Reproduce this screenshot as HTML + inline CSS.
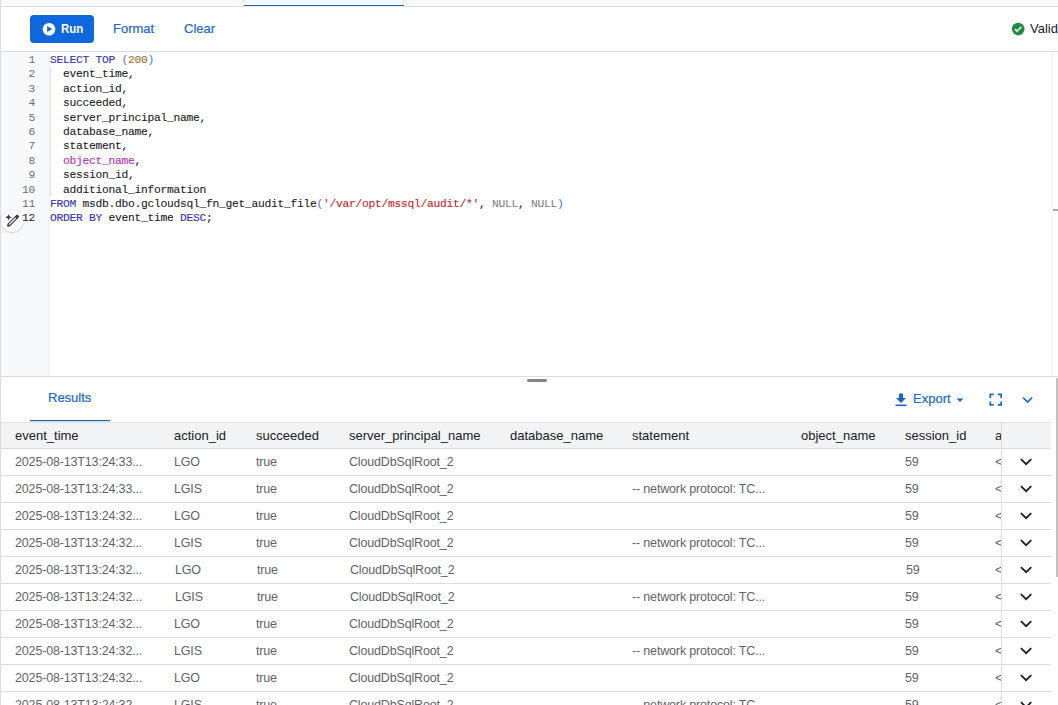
<!DOCTYPE html>
<html><head><meta charset="utf-8">
<style>
*{box-sizing:border-box;margin:0;padding:0}
html,body{width:1058px;height:705px;overflow:hidden;background:#fff;font-family:"Liberation Sans",sans-serif;color:#202124}
.abs{position:absolute}
#top{left:0;top:0;width:1058px;height:7px;background:linear-gradient(#f8f9fb 0,#f8f9fb 4px,#fbfcfd 5px,#fbfcfd 6px);border-bottom:1px solid #d9dadc}
#tabline{left:244px;top:0;width:160px;height:7px;background:linear-gradient(#f6fcff 0,#f2fbff 5px,#2a5f9f 5px,#2a5f9f 6.2px,#dbeaf8 6.2px,#f5f9fd 7px)}
#lborder{left:0;top:0;width:1px;height:705px;background:#dadce0}
#run{left:30px;top:15px;width:64px;height:28px;background:#0f67de;border-radius:4px}
#runtxt{left:61px;top:21px;font-size:13px;font-weight:700;color:#fff;line-height:15px;transform:scaleX(0.88);transform-origin:0 0}
.tbtn{font-size:13px;color:#1a66c9;line-height:15px;top:21px;-webkit-text-stroke:0.2px currentColor}
#tbborder{left:0;top:51px;width:1058px;height:1px;background:#dadce0}
#gutter{left:1px;top:52px;width:49px;height:324px;background:#f8f9fa;box-shadow:inset -2px 0 0 #f4f5f5}
#edborder{left:0;top:376px;width:1058px;height:1px;background:#dadce0}
.ln{position:absolute;left:0;width:35px;text-align:right;font-family:"Liberation Mono",monospace;font-size:11.3px;letter-spacing:-0.28px;line-height:14.4px;color:#6b6e72}
.cl{position:absolute;left:50px;font-family:"Liberation Mono",monospace;font-size:11.3px;letter-spacing:-0.28px;line-height:14.4px;color:#202124;white-space:pre;-webkit-text-stroke:0.1px currentColor}
.k{color:#3333b3}.n{color:#9c6b24}.p{color:#5a82d2}.s{color:#c5221f}.g{color:#80868b}.m{color:#b52fb5}
#guide{left:50px;top:67px;width:1px;height:129px;background:#e0e0e0}
#valid{left:1030px;top:21px;font-size:13px;color:#202124;line-height:15px}
#restab{left:48px;top:390px;font-size:13px;color:#1a66c9;line-height:15px;-webkit-text-stroke:0.2px currentColor}
#resline{left:30px;top:420px;width:80px;height:1px;background:#2459a0;box-shadow:0 1px 0 #bfe0fa}
#thead{left:1px;top:422px;width:1050px;height:27px;background:#f1f3f4;border-top:1px solid #e3e3e3;border-bottom:1px solid #dadce0}
.th{position:absolute;top:428px;font-size:13px;line-height:15px;color:#202124;white-space:nowrap}
.row{position:absolute;left:1px;width:1050px;height:27px;border-bottom:1px solid #dadce0}
.td{position:absolute;font-size:12.5px;letter-spacing:-0.16px;line-height:15px;color:#5f6368;white-space:nowrap;overflow:hidden}
#vdiv{left:1001px;top:422px;width:1px;height:283px;background:#dadce0}
#scroll{left:1056px;top:378px;width:2px;height:199px;background:#c1c1c1}
#export{left:913px;top:391px;font-size:13px;color:#1a66c9;line-height:15px;-webkit-text-stroke:0.2px currentColor}
</style></head><body>
<div id="top" class="abs"></div>
<div id="tabline" class="abs"></div>
<div id="lborder" class="abs"></div>

<div id="run" class="abs"></div>
<svg class="abs" style="left:42px;top:22px" width="14" height="14" viewBox="0 0 14 14"><circle cx="7" cy="7.2" r="6.3" fill="#fff"/><path d="M5.1 4.0 L10.3 7.1 L5.1 10.0 Z" fill="#0f67de"/></svg>
<div id="runtxt" class="abs">Run</div>
<div class="abs tbtn" style="left:113px">Format</div>
<div class="abs tbtn" style="left:184px">Clear</div>
<svg class="abs" style="left:1011px;top:22px" width="14" height="14" viewBox="0 0 14 14"><circle cx="7.2" cy="7" r="6.3" fill="#1e8e3e"/><path d="M3.9 7.2 L6.0 9.2 L10.3 4.9" stroke="#fff" stroke-width="1.6" fill="none"/></svg>
<div id="valid" class="abs">Valid</div>
<div id="tbborder" class="abs"></div>

<div id="gutter" class="abs"></div>
<div id="guide" class="abs"></div>
<div class="abs" style="left:1052px;top:52px;width:1px;height:324px;background:#f0f0f0"></div>
<div class="abs" style="left:1053px;top:209px;width:5px;height:2px;background:#a8a8a8"></div>
<div id="code" class="abs" style="left:0;top:53px;width:1058px;height:200px">
<div class="ln" style="top:0px">1</div><div class="cl" style="top:0px"><span class="k">SELECT</span> <span class="k">TOP</span> <span class="p">(</span><span class="n">200</span><span class="p">)</span></div>
<div class="ln" style="top:14.4px">2</div><div class="cl" style="top:14.4px">  event_time,</div>
<div class="ln" style="top:28.8px">3</div><div class="cl" style="top:28.8px">  action_id,</div>
<div class="ln" style="top:43.2px">4</div><div class="cl" style="top:43.2px">  succeeded,</div>
<div class="ln" style="top:57.6px">5</div><div class="cl" style="top:57.6px">  server_principal_name,</div>
<div class="ln" style="top:72px">6</div><div class="cl" style="top:72px">  database_name,</div>
<div class="ln" style="top:86.4px">7</div><div class="cl" style="top:86.4px">  statement,</div>
<div class="ln" style="top:100.8px">8</div><div class="cl" style="top:100.8px">  <span class="m">object_name</span>,</div>
<div class="ln" style="top:115.2px">9</div><div class="cl" style="top:115.2px">  session_id,</div>
<div class="ln" style="top:129.6px">10</div><div class="cl" style="top:129.6px">  additional_information</div>
<div class="ln" style="top:144px">11</div><div class="cl" style="top:144px"><span class="k">FROM</span> msdb.dbo.gcloudsql_fn_get_audit_file<span class="p">(</span><span class="s">'/var/opt/mssql/audit/*'</span>, <span class="g">NULL</span>, <span class="g">NULL</span><span class="p">)</span></div>
<div class="ln" style="top:158.4px;color:#202124">12</div><div class="cl" style="top:158.4px"><span class="k">ORDER</span> <span class="k">BY</span> event_time <span class="k">DESC</span>;</div>
</div>
<!-- magic pencil -->
<div class="abs" style="left:1px;top:210px;width:22px;height:22px;border-radius:50%;background:#fff;box-shadow:0 0.5px 2px rgba(60,64,67,.35)"></div>
<svg class="abs" style="left:0;top:206px" width="28" height="30" viewBox="0 0 28 30"><path d="M8.5 8.2 Q8.9 10.9 11.6 11.3 Q8.9 11.7 8.5 14.4 Q8.1 11.7 5.4 11.3 Q8.1 10.9 8.5 8.2 Z" fill="#3c4043"/><g transform="translate(12.75 15) rotate(-45)"><path d="M-8 0 L-5.9 -1.75 L7 -1.75 Q7.9 -1.75 7.9 -0.85 L7.9 0.85 Q7.9 1.75 7 1.75 L-5.9 1.75 Z" fill="#3c4043"/><rect x="-5.2" y="-0.6" width="9.4" height="1.2" fill="#fff"/></g></svg>
<div id="edborder" class="abs"></div>
<div class="abs" style="left:527px;top:379px;width:20px;height:3px;border-radius:2px;background:#80868b"></div>

<div id="restab" class="abs">Results</div>
<div id="resline" class="abs"></div>
<svg class="abs" style="left:894px;top:392px" width="14" height="16" viewBox="0 0 14 16"><path d="M5 1.5 H9 V6 H12 L7 11 L2 6 H5 Z" fill="#1a66c9"/><rect x="1.5" y="12.5" width="11" height="1.6" fill="#1a66c9"/></svg>
<div id="export" class="abs">Export</div>
<svg class="abs" style="left:955px;top:397px" width="10" height="6" viewBox="0 0 10 6"><path d="M1.5 1.5 H8.5 L5 5 Z" fill="#1a66c9"/></svg>
<svg class="abs" style="left:988px;top:392px" width="15" height="15" viewBox="0 0 15 15"><path d="M2.25 5.9 V2.4 H5.7 M9.8 2.4 H13.15 V5.9 M13.15 9.4 V12.85 H9.8 M5.7 12.85 H2.25 V9.4" stroke="#1a66c9" stroke-width="1.7" fill="none"/></svg>
<svg class="abs" style="left:1020px;top:394px" width="15" height="12" viewBox="0 0 15 12"><path d="M3 3.5 L7.6 8.1 L12.2 3.5" stroke="#1a66c9" stroke-width="1.7" fill="none"/></svg>

<div id="thead" class="abs"></div>
<div class="abs" style="left:30px;top:421px;width:80px;height:2px;background:#cfe4f8"></div>
<div class="th" style="left:15px">event_time</div>
<div class="th" style="left:174px">action_id</div>
<div class="th" style="left:256px">succeeded</div>
<div class="th" style="left:349px">server_principal_name</div>
<div class="th" style="left:510px">database_name</div>
<div class="th" style="left:632px">statement</div>
<div class="th" style="left:801px">object_name</div>
<div class="th" style="left:905px">session_id</div>
<div class="th" style="left:995px;width:6px;overflow:hidden">a</div>

<div id="rows">
<div class="row" style="top:449px"></div>
<div class="td" style="left:15px;top:455px">2025-08-13T13:24:33...</div>
<div class="td" style="left:174px;top:455px">LGO</div>
<div class="td" style="left:256px;top:455px">true</div>
<div class="td" style="left:349px;top:455px">CloudDbSqlRoot_2</div>
<div class="td" style="left:905px;top:455px">59</div>
<div class="td" style="left:995px;top:455px;width:6px">&lt;</div>
<svg class="abs" style="left:1018px;top:455px" width="16" height="14" viewBox="0 0 16 14"><path d="M2.9 4.1 L8.1 9.2 L13.3 4.1" stroke="#1f1f1f" stroke-width="1.8" fill="none"/></svg>
<div class="row" style="top:476px"></div>
<div class="td" style="left:15px;top:482px">2025-08-13T13:24:33...</div>
<div class="td" style="left:174px;top:482px">LGIS</div>
<div class="td" style="left:256px;top:482px">true</div>
<div class="td" style="left:349px;top:482px">CloudDbSqlRoot_2</div>
<div class="td" style="left:632px;top:482px">-- network protocol: TC...</div>
<div class="td" style="left:905px;top:482px">59</div>
<div class="td" style="left:995px;top:482px;width:6px">&lt;</div>
<svg class="abs" style="left:1018px;top:482px" width="16" height="14" viewBox="0 0 16 14"><path d="M2.9 4.1 L8.1 9.2 L13.3 4.1" stroke="#1f1f1f" stroke-width="1.8" fill="none"/></svg>
<div class="row" style="top:503px"></div>
<div class="td" style="left:15px;top:509px">2025-08-13T13:24:32...</div>
<div class="td" style="left:174px;top:509px">LGO</div>
<div class="td" style="left:256px;top:509px">true</div>
<div class="td" style="left:349px;top:509px">CloudDbSqlRoot_2</div>
<div class="td" style="left:905px;top:509px">59</div>
<div class="td" style="left:995px;top:509px;width:6px">&lt;</div>
<svg class="abs" style="left:1018px;top:509px" width="16" height="14" viewBox="0 0 16 14"><path d="M2.9 4.1 L8.1 9.2 L13.3 4.1" stroke="#1f1f1f" stroke-width="1.8" fill="none"/></svg>
<div class="row" style="top:530px"></div>
<div class="td" style="left:15px;top:536px">2025-08-13T13:24:32...</div>
<div class="td" style="left:174px;top:536px">LGIS</div>
<div class="td" style="left:256px;top:536px">true</div>
<div class="td" style="left:349px;top:536px">CloudDbSqlRoot_2</div>
<div class="td" style="left:632px;top:536px">-- network protocol: TC...</div>
<div class="td" style="left:905px;top:536px">59</div>
<div class="td" style="left:995px;top:536px;width:6px">&lt;</div>
<svg class="abs" style="left:1018px;top:536px" width="16" height="14" viewBox="0 0 16 14"><path d="M2.9 4.1 L8.1 9.2 L13.3 4.1" stroke="#1f1f1f" stroke-width="1.8" fill="none"/></svg>
<div class="row" style="top:557px"></div>
<div class="td" style="left:15px;top:563px">2025-08-13T13:24:32...</div>
<div class="td" style="left:175px;top:563px">LGO</div>
<div class="td" style="left:257px;top:563px">true</div>
<div class="td" style="left:350px;top:563px">CloudDbSqlRoot_2</div>
<div class="td" style="left:906px;top:563px">59</div>
<div class="td" style="left:995px;top:563px;width:6px">&lt;</div>
<svg class="abs" style="left:1018px;top:563px" width="16" height="14" viewBox="0 0 16 14"><path d="M2.9 4.1 L8.1 9.2 L13.3 4.1" stroke="#1f1f1f" stroke-width="1.8" fill="none"/></svg>
<div class="row" style="top:584px"></div>
<div class="td" style="left:15px;top:590px">2025-08-13T13:24:32...</div>
<div class="td" style="left:175px;top:590px">LGIS</div>
<div class="td" style="left:257px;top:590px">true</div>
<div class="td" style="left:350px;top:590px">CloudDbSqlRoot_2</div>
<div class="td" style="left:632px;top:590px">-- network protocol: TC...</div>
<div class="td" style="left:905px;top:590px">59</div>
<div class="td" style="left:995px;top:590px;width:6px">&lt;</div>
<svg class="abs" style="left:1018px;top:590px" width="16" height="14" viewBox="0 0 16 14"><path d="M2.9 4.1 L8.1 9.2 L13.3 4.1" stroke="#1f1f1f" stroke-width="1.8" fill="none"/></svg>
<div class="row" style="top:611px"></div>
<div class="td" style="left:15px;top:617px">2025-08-13T13:24:32...</div>
<div class="td" style="left:174px;top:617px">LGO</div>
<div class="td" style="left:256px;top:617px">true</div>
<div class="td" style="left:349px;top:617px">CloudDbSqlRoot_2</div>
<div class="td" style="left:905px;top:617px">59</div>
<div class="td" style="left:995px;top:617px;width:6px">&lt;</div>
<svg class="abs" style="left:1018px;top:617px" width="16" height="14" viewBox="0 0 16 14"><path d="M2.9 4.1 L8.1 9.2 L13.3 4.1" stroke="#1f1f1f" stroke-width="1.8" fill="none"/></svg>
<div class="row" style="top:638px"></div>
<div class="td" style="left:15px;top:644px">2025-08-13T13:24:32...</div>
<div class="td" style="left:174px;top:644px">LGIS</div>
<div class="td" style="left:256px;top:644px">true</div>
<div class="td" style="left:349px;top:644px">CloudDbSqlRoot_2</div>
<div class="td" style="left:632px;top:644px">-- network protocol: TC...</div>
<div class="td" style="left:905px;top:644px">59</div>
<div class="td" style="left:995px;top:644px;width:6px">&lt;</div>
<svg class="abs" style="left:1018px;top:644px" width="16" height="14" viewBox="0 0 16 14"><path d="M2.9 4.1 L8.1 9.2 L13.3 4.1" stroke="#1f1f1f" stroke-width="1.8" fill="none"/></svg>
<div class="row" style="top:665px"></div>
<div class="td" style="left:15px;top:671px">2025-08-13T13:24:32...</div>
<div class="td" style="left:174px;top:671px">LGO</div>
<div class="td" style="left:256px;top:671px">true</div>
<div class="td" style="left:349px;top:671px">CloudDbSqlRoot_2</div>
<div class="td" style="left:905px;top:671px">59</div>
<div class="td" style="left:995px;top:671px;width:6px">&lt;</div>
<svg class="abs" style="left:1018px;top:671px" width="16" height="14" viewBox="0 0 16 14"><path d="M2.9 4.1 L8.1 9.2 L13.3 4.1" stroke="#1f1f1f" stroke-width="1.8" fill="none"/></svg>
<div class="row" style="top:692px"></div>
<div class="td" style="left:15px;top:698px">2025-08-13T13:24:32...</div>
<div class="td" style="left:174px;top:698px">LGIS</div>
<div class="td" style="left:256px;top:698px">true</div>
<div class="td" style="left:349px;top:698px">CloudDbSqlRoot_2</div>
<div class="td" style="left:632px;top:698px">-- network protocol: TC...</div>
<div class="td" style="left:905px;top:698px">59</div>
<div class="td" style="left:995px;top:698px;width:6px">&lt;</div>
<svg class="abs" style="left:1018px;top:698px" width="16" height="14" viewBox="0 0 16 14"><path d="M2.9 4.1 L8.1 9.2 L13.3 4.1" stroke="#1f1f1f" stroke-width="1.8" fill="none"/></svg>
</div>
<div id="vdiv" class="abs"></div>
<div id="scroll" class="abs"></div>
</body></html>
